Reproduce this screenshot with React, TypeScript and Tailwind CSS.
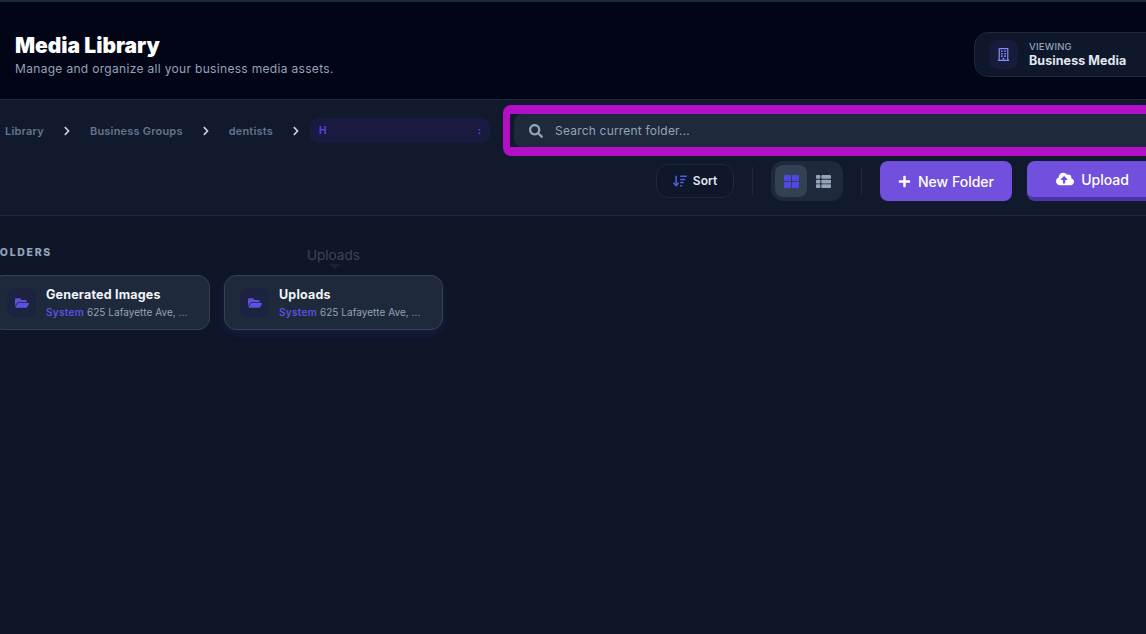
import React from 'react';
import {
  FaRegBuilding,
  FaChevronRight,
  FaChevronDown,
  FaFolderOpen,
  FaSearch,
  FaPlus,
  FaCloudUploadAlt,
  FaThLarge,
  FaThList,
} from 'react-icons/fa';
import { FaArrowDownWideShort } from 'react-icons/fa6';

const folders = [
  { name: 'Generated Images', hovered: false },
  { name: 'Uploads', hovered: true },
];

function Crumb({ label }: { label: string }) {
  return (
    <>
      <span className="mt-[1px] text-[11px] font-semibold tracking-[0.2px] text-[#64748b]">{label}</span>
      <FaChevronRight className="text-[10px] text-[#cbd5e1]" />
    </>
  );
}

export default function App() {
  return (
    <div className="relative w-[1146px] h-[634px] overflow-hidden bg-[#0f1628] font-['Inter',sans-serif]">
      <header className="flex h-[100px] w-[1190px] items-center justify-between border-t-2 border-b border-t-[#1e293b] border-b-[#1e293b] bg-[#020515] pl-[15px]">
        <div className="mt-[9px]">
          <h1 className="text-[21px] leading-[24px] font-black tracking-[0px] text-white">Media Library</h1>
          <p className="mt-[3px] text-[12px] leading-[16px] tracking-[0.32px] text-[#94a3b8]">
            Manage and organize all your business media assets.
          </p>
        </div>
        <div className="mt-[7px] flex h-[45px] w-[216px] items-center gap-[11px] rounded-[14px] border border-[#1e293b] bg-[#0f172a] pl-[14px]">
          <div className="flex h-[29px] w-[29px] items-center justify-center rounded-lg bg-[#171c3a]">
            <FaRegBuilding className="text-[13px] text-[#818cf8]" />
          </div>
          <div className="w-[115px]">
            <div className="text-[9.5px] leading-[12px] font-medium tracking-[0.2px] text-[#94a3b8]">VIEWING</div>
            <div className="text-[12.5px] leading-[15px] font-bold tracking-[0.08px] text-[#e2e8f0]">Business Media</div>
          </div>
          <FaChevronDown className="text-[9px] text-[#94a3b8]" />
        </div>
      </header>

      <section className="h-[116px] w-[1190px] border-b border-[#1e293b] bg-[#111a2c]">
        <div className="flex h-[56px] items-center pt-[5px]">
          <div className="flex w-[503px] items-center gap-[18px] pl-[5px]">
            <Crumb label="Library" />
            <Crumb label="Business Groups" />
            <Crumb label="dentists" />
            <div className="ml-[-9px] flex h-[25px] w-[180px] items-center justify-between rounded-lg bg-[#181b3f] px-[9px] text-[10px] font-bold text-[#4f46e5]">
              <span>H</span>
              <span>:</span>
            </div>
          </div>
          <div className="h-[51px] w-[680px] rounded-[8px] border-x-[7px] border-y-[9px] border-[#b30fc6] bg-[#111a2c]">
            <div className="ml-[4px] flex h-[33px] items-center gap-[12px] rounded-lg bg-[#1e293b] pl-[15px]">
              <FaSearch className="text-[14px] text-[#94a3b8]" />
              <span className="text-[12px] tracking-[0.2px] text-[#94a3b8]">Search current folder...</span>
            </div>
          </div>
        </div>
        <div className="ml-[656px] flex items-center pt-[5px]">
          <button className="flex h-[34px] w-[78px] items-center justify-center gap-[6px] rounded-xl border border-[#1e293b] bg-[#0f172a] text-[12px] font-semibold text-[#e2e8f0]">
            <FaArrowDownWideShort className="text-[14px] text-[#4f5fe0]" />
            Sort
          </button>
          <div className="mx-[18px] h-[28px] w-px bg-[#1e293b]" />
          <div className="flex h-[40px] w-[72px] items-center gap-[2px] rounded-xl bg-[#1e293b] p-[4px]">
            <div className="flex h-[32px] w-[32px] items-center justify-center rounded-lg bg-[#334155]">
              <FaThLarge className="text-[15px] text-[#4f46e5]" />
            </div>
            <div className="flex h-[32px] w-[28px] items-center justify-center">
              <FaThList className="text-[15px] text-[#94a3b8]" />
            </div>
          </div>
          <div className="mx-[18px] h-[28px] w-px bg-[#1e293b]" />
          <button className="flex h-[40px] w-[132px] items-center justify-center gap-[7px] rounded-lg bg-[#7050dc] text-[14px] font-medium text-white">
            <FaPlus className="text-[13px]" />
            New Folder
          </button>
          <button className="ml-[15px] flex h-[40px] w-[131px] items-center justify-center gap-[7px] rounded-lg border-b-4 border-[#4c35a8] bg-[#7050dc] text-[14px] font-medium text-white">
            <FaCloudUploadAlt className="text-[18px]" />
            Upload
          </button>
        </div>
      </section>

      <main className="ml-[-9px] pt-[30px]">
        <h2 className="pl-[1px] text-[10.5px] leading-[14px] font-extrabold tracking-[1.7px] text-[#94a3b8]">FOLDERS</h2>
        <div className="mt-[15px] flex gap-[14px]">
          {folders.map(folder => (
            <div
              key={folder.name}
              className={`flex h-[55px] w-[219px] items-center gap-[10px] rounded-xl border border-[#334155] bg-[#1e293b] pl-[15px] ${
                folder.hovered ? 'shadow-[0_4px_10px_rgba(79,70,229,0.12)]' : ''
              }`}
            >
              <div className="flex h-[29px] w-[29px] items-center justify-center rounded-lg bg-[#1c2340]">
                <FaFolderOpen className="text-[14px] text-[#5b52e0]" />
              </div>
              <div>
                <div className="text-[12.5px] leading-[16px] font-bold tracking-[0.2px] text-[#f1f5f9]">{folder.name}</div>
                <div className="mt-[3px] text-[10px] leading-[13px] tracking-[0.05px] text-[#94a3b8]">
                  <span className="font-semibold tracking-[0.3px] text-[#5b52e0]">System</span> 625 Lafayette Ave, ...
                </div>
              </div>
            </div>
          ))}
        </div>
      </main>

      {/* tooltip fading in over the hovered card */}
      <div className="absolute left-[307px] top-[247px] text-[13.5px] leading-[16px] text-[#3c4658]">Uploads</div>
      <div className="absolute left-[329px] top-[264px] h-0 w-0 border-x-[6px] border-t-[5px] border-x-transparent border-t-[#1a2234]" />
    </div>
  );
}
